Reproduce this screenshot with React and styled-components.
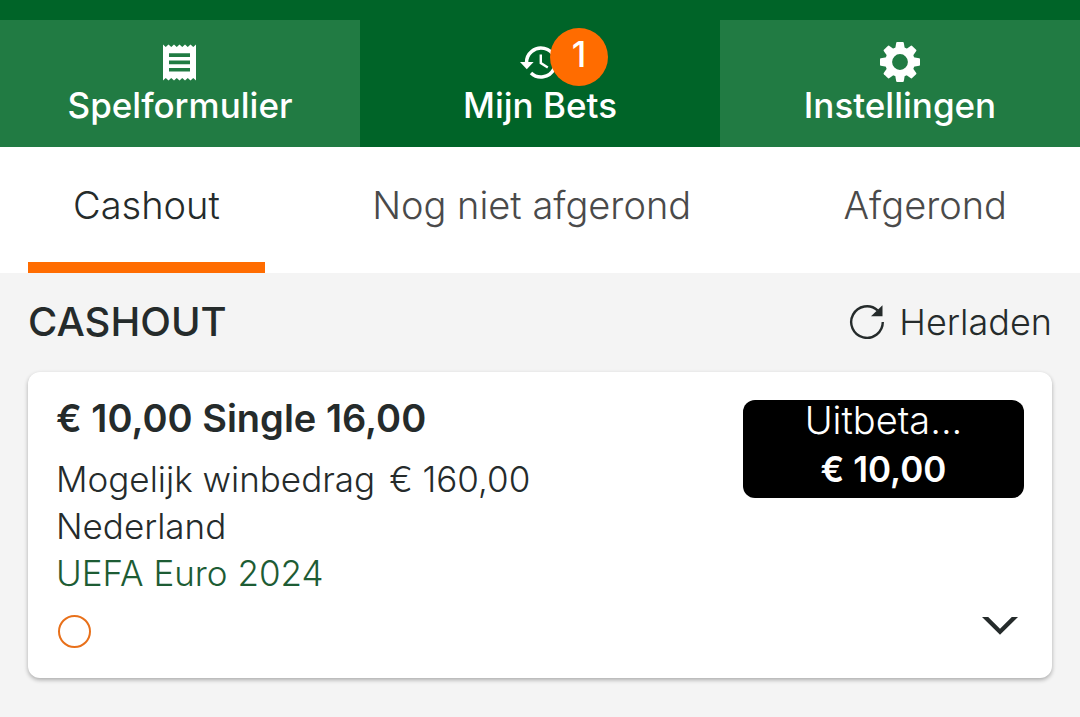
import React, { useState } from "react";
import styled, { createGlobalStyle, css } from "styled-components";

const GlobalStyle = createGlobalStyle`
  * {
    box-sizing: border-box;
  }

  body {
    margin: 0;
    background: #f4f4f4;
    color: #252b2b;
    font-family: Inter, "Liberation Sans", sans-serif;
    font-size: 35px;
    font-weight: 300;
  }

  button {
    border: 0;
    padding: 0;
    background: none;
    color: inherit;
    font: inherit;
    cursor: pointer;
  }
`;

const NavBar = styled.nav`
  display: grid;
  grid-template-columns: repeat(3, 1fr);
  padding-top: 20px;
  background: #006428;
`;

const NavButton = styled.button`
  && {
    display: flex;
    flex-direction: column;
    align-items: center;
    padding: 22px 0 18px;
    background: ${(props) => (props.$active ? "#006428" : "#217b43")};
    color: #fff;
    font-size: 35px;
    font-weight: 500;
    line-height: 47px;
  }
`;

const IconBox = styled.span`
  position: relative;
  display: block;
  width: 40px;
  height: 40px;

  svg {
    display: block;
  }
`;

const Badge = styled.span`
  position: absolute;
  top: -14px;
  left: 30px;
  width: 58px;
  height: 58px;
  border-radius: 50%;
  background: #ff6c00;
  font-size: 35px;
  line-height: 52px;
  text-align: center;
`;

const TabBar = styled.div`
  display: flex;
  justify-content: space-between;
  padding: 0 28px;
  background: #fff;
`;

const TabButton = styled.button`
  && {
    padding: 34px 45px 33px;
    border-bottom: 11px solid
      ${(props) => (props.$active ? "#ff6c00" : "transparent")};
    color: ${(props) => (props.$active ? "#252b2b" : "#4a4a4a")};
    font-size: 38px;
    line-height: 48px;
    white-space: nowrap;
  }
`;

const Content = styled.main`
  padding: 25px 28px 38px;
`;

const ContentHead = styled.div`
  display: flex;
  align-items: center;
  justify-content: space-between;
  margin-bottom: 26px;
`;

const Heading = styled.h1`
  margin: 0;
  font-size: 40px;
  font-weight: 500;
  line-height: 48px;
`;

const ReloadButton = styled.button`
  && {
    display: flex;
    align-items: center;
    gap: 14px;
    font-size: 36px;
    line-height: 48px;
  }
`;

const Card = styled.article`
  padding: 22px 28px 30px 28px;
  border-radius: 12px;
  background: #fff;
  box-shadow: 0 2px 4px rgba(0, 0, 0, 0.3);
`;

const CardRow = styled.div`
  display: flex;
  align-items: flex-start;
  justify-content: space-between;
`;

const BetTitle = styled.h2`
  margin: 0 0 14px;
  font-size: 38px;
  font-weight: 600;
  line-height: 48px;
`;

const textLine = css`
  margin: 0;
  font-size: 35px;
  line-height: 47px;
`;

const Line = styled.p`
  ${textLine}
`;

const Amount = styled.span`
  margin-left: 14px;
`;

const EventLink = styled.a`
  ${textLine}
  display: block;
  color: #1d5c34;
  text-decoration: none;
`;

const PayoutButton = styled.button`
  && {
    width: 281px;
    margin-top: 6px;
    padding-bottom: 8px;
    border-radius: 12px;
    background: #000;
    color: #fff;
  }
`;

const PayoutLabel = styled.span`
  display: block;
  margin-bottom: 8px;
  font-size: 38px;
  line-height: 40px;
`;

const PayoutAmount = styled.strong`
  display: block;
  font-weight: 600;
  line-height: 42px;
`;

const StatusRow = styled.div`
  display: flex;
  align-items: center;
  justify-content: space-between;
  padding: 18px 6px 0 2px;
`;

const Status = styled.span`
  width: 33px;
  height: 33px;
  border: 2px solid #e8701a;
  border-radius: 50%;
`;

const ExpandButton = styled.button`
  svg {
    display: block;
    margin-bottom: 12px;
  }
`;

const TicketIcon = () => (
  <svg width="40" height="40" viewBox="0 0 40 40" aria-hidden="true">
    <path
      fill="#fff"
      fillRule="evenodd"
      d="M3 2.5l2.75 2.5 2.75-2.5 2.75 2.5 2.75-2.5 2.75 2.5 2.75-2.5 2.75 2.5 2.75-2.5 2.75 2.5 2.75-2.5 2.75 2.5L36 2.5v36l-2.75-2.5-2.75 2.5-2.75-2.5-2.75 2.5-2.75-2.5-2.75 2.5-2.75-2.5-2.75 2.5-2.75-2.5-2.75 2.5-2.75-2.5L3 38.5zM9 11.3h21v3.7H9zM9 18.6h21v3.6H9zM9 26h21v3.4H9z"
    />
  </svg>
);

const HistoryIcon = () => (
  <svg width="40" height="40" viewBox="0 0 40 40" aria-hidden="true">
    <path
      fill="none"
      stroke="#fff"
      strokeWidth="3.5"
      d="M6.5 21A14.5 14.5 0 1 1 11 31"
    />
    <path fill="#fff" d="M0 20h13.6L6.8 27.2z" />
    <path
      fill="none"
      stroke="#fff"
      strokeWidth="2.4"
      d="M20.8 12.5v8.6l7 4.3"
    />
  </svg>
);

const GearIcon = () => (
  <svg width="40" height="40" viewBox="-20 -20 40 40" aria-hidden="true">
    <defs>
      <path id="gear-tooth" d="M-5-12l1.2-7.2q.2-.8 1-.8h5.6q.8 0 1 .8L5-12z" />
    </defs>
    <g fill="#fff">
      {[0, 45, 90, 135, 180, 225, 270, 315].map((angle) => (
        <use key={angle} href="#gear-tooth" transform={`rotate(${angle})`} />
      ))}
    </g>
    <circle r="11.4" fill="none" stroke="#fff" strokeWidth="7" />
  </svg>
);

const ReloadIcon = () => (
  <svg width="36" height="36" viewBox="0 0 36 36" aria-hidden="true">
    <path
      fill="none"
      stroke="#252b2b"
      strokeWidth="2.4"
      d="M33.8 18A15.8 15.8 0 1 1 28.6 6.3"
    />
    <path fill="#252b2b" d="M33.5 1.3v11H22z" />
  </svg>
);

const ChevronIcon = () => (
  <svg width="36" height="18" viewBox="0 0 36 18" aria-hidden="true">
    <path fill="#252b2b" d="M0 0h6.2L18 11.8 29.8 0H36L18 17.8z" />
  </svg>
);

const navItems = [
  { label: "Spelformulier", Icon: TicketIcon },
  { label: "Mijn Bets", Icon: HistoryIcon, count: 1 },
  { label: "Instellingen", Icon: GearIcon },
];

const tabs = ["Cashout", "Nog niet afgerond", "Afgerond"];

function BetCard() {
  return (
    <Card>
      <CardRow>
        <div>
          <BetTitle>€ 10,00 Single 16,00</BetTitle>
          <Line>
            Mogelijk winbedrag<Amount>€ 160,00</Amount>
          </Line>
          <Line>Nederland</Line>
          <EventLink href="#euro-2024">UEFA Euro 2024</EventLink>
        </div>
        <PayoutButton type="button">
          <PayoutLabel>Uitbeta...</PayoutLabel>
          <PayoutAmount>€ 10,00</PayoutAmount>
        </PayoutButton>
      </CardRow>
      <StatusRow>
        <Status />
        <ExpandButton type="button" aria-label="Details">
          <ChevronIcon />
        </ExpandButton>
      </StatusRow>
    </Card>
  );
}

function App() {
  const [page, setPage] = useState("Mijn Bets");
  const [tab, setTab] = useState("Cashout");

  return (
    <>
      <GlobalStyle />
      <NavBar>
        {navItems.map(({ label, Icon, count }) => (
          <NavButton
            key={label}
            type="button"
            $active={page === label}
            onClick={() => setPage(label)}
          >
            <IconBox>
              <Icon />
              {count && <Badge>{count}</Badge>}
            </IconBox>
            {label}
          </NavButton>
        ))}
      </NavBar>
      <TabBar role="tablist">
        {tabs.map((name) => (
          <TabButton
            key={name}
            type="button"
            role="tab"
            aria-selected={tab === name}
            $active={tab === name}
            onClick={() => setTab(name)}
          >
            {name}
          </TabButton>
        ))}
      </TabBar>
      <Content>
        <ContentHead>
          <Heading>CASHOUT</Heading>
          <ReloadButton type="button">
            <ReloadIcon />
            Herladen
          </ReloadButton>
        </ContentHead>
        <BetCard />
      </Content>
    </>
  );
}

export default App;
